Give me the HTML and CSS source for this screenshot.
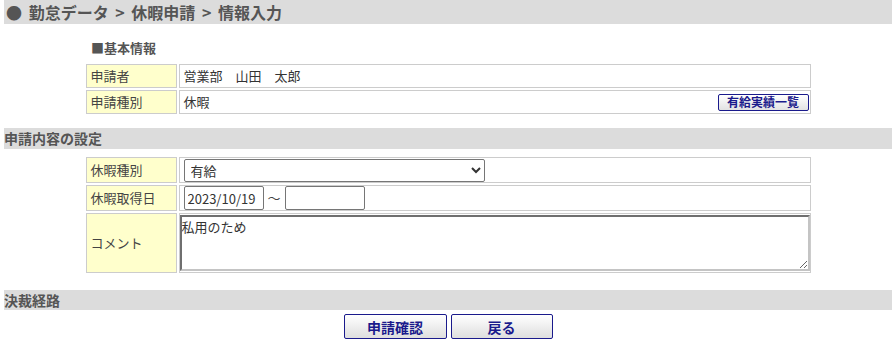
FILE: index.html
```html
<!DOCTYPE html>
<html lang="ja">
<head>
<meta charset="utf-8">
<title>情報入力</title>
<link rel="stylesheet" href="styles.css">
</head>
<body>
<div class="crumb">● 勤怠データ &gt; 休暇申請 &gt; 情報入力</div>

<div class="subhead">■基本情報</div>
<table class="form info">
  <tr>
    <th>申請者</th>
    <td>営業部　山田　太郎</td>
  </tr>
  <tr>
    <th>申請種別</th>
    <td><div class="field between"><span>休暇</span><button class="mini" type="button">有給実績一覧</button></div></td>
  </tr>
</table>

<div class="bar bar-settings">申請内容の設定</div>
<table class="form settings">
  <tr>
    <th>休暇種別</th>
    <td><div class="field"><select class="sel"><option>有給</option></select></div></td>
  </tr>
  <tr>
    <th>休暇取得日</th>
    <td><div class="field"><input class="date" type="text" value="2023/10/19"><span class="tilde">～</span><input class="date" type="text" value=""></div></td>
  </tr>
  <tr class="comment-row">
    <th>コメント</th>
    <td class="ta-cell"><textarea class="ta">私用のため</textarea></td>
  </tr>
</table>

<div class="bar bar-route">決裁経路</div>
<div class="actions">
  <button class="btn btn-confirm" type="button">申請確認</button>
  <button class="btn btn-back" type="button">戻る</button>
</div>
</body>
</html>
```

FILE: styles.css
```css
html, body {
  background: #ffffff;
}
body {
  margin: 0 4px;
  font-family: "Noto Sans CJK JP", "Noto Sans", sans-serif;
  color: #333333;
  font-size: 13px;
}
.crumb {
  background: #dcdcdc;
  height: 24px;
  line-height: 24px;
  padding-left: 2px;
  font-size: 16px;
  font-weight: bold;
  color: #555555;
  white-space: pre;
  word-spacing: 3px;
}
.subhead {
  margin: 14px 0 4px 87px;
  height: 20px;
  line-height: 20px;
  font-size: 13px;
  font-weight: bold;
  color: #555555;
}
.form {
  width: 729px;
  margin: 0 auto;
  border-collapse: separate;
  border-spacing: 2px;
}
.form th, .form td {
  border: 1px solid #cccccc;
  font-size: 13px;
  font-weight: normal;
  text-align: left;
  color: #333333;
  padding: 0 4px;
  height: 22px;
  line-height: 18px;
}
.form th {
  width: 81px;
  background: #ffffcc;
  color: #444444;
}
.field {
  display: flex;
  align-items: center;
}
.between {
  justify-content: space-between;
  height: 22px;
}
.mini {
  margin-right: -3px;
  height: 17px;
  width: 91px;
  padding: 0;
  font-family: inherit;
  font-size: 12px;
  line-height: 14px;
  font-weight: bold;
  color: #1a1a8c;
  background: linear-gradient(#ffffff, #e2e2e2);
  border: 1px solid #1a1a8c;
  border-radius: 2px;
}
.bar {
  background: #dcdcdc;
  font-size: 14px;
  font-weight: bold;
  color: #555555;
  white-space: nowrap;
}
.bar-settings {
  margin-top: 12px;
  height: 21px;
  line-height: 21px;
  margin-bottom: 6px;
}
.settings th, .settings td {
  height: 24px;
}
.settings .field {
  height: 24px;
}
.sel {
  display: block;
  width: 301px;
  height: 23px;
  font-family: inherit;
  font-size: 13px;
  color: #333333;
  border: 1px solid #767676;
  border-radius: 2px;
  background: #ffffff;
  padding: 0 2px;
}
.date {
  width: 80px;
  height: 24px;
  box-sizing: border-box;
  border: 1px solid #767676;
  border-radius: 2px;
  font-family: inherit;
  font-size: 13px;
  color: #333333;
  padding: 0 3px;
  margin: 0;
}
.tilde {
  display: inline-block;
  width: 21px;
  text-align: center;
  color: #444444;
}
.comment-row th, .comment-row td {
  height: 58px;
}
.ta-cell {
  padding: 0 !important;
}
.ta {
  display: block;
  width: 100%;
  height: 56px;
  box-sizing: border-box;
  margin: 1px 0;
  border: 2px solid;
  border-color: #6f6f6f #c4c4c4 #c4c4c4 #6f6f6f;
  font-family: inherit;
  font-size: 13px;
  color: #333333;
  padding: 0;
  resize: both;
}
.bar-route {
  margin-top: 15px;
  height: 20px;
  line-height: 20px;
}
.actions {
  display: flex;
  justify-content: center;
  gap: 4px;
  margin-top: 4px;
}
.btn {
  height: 25px;
  font-family: inherit;
  font-size: 14px;
  font-weight: bold;
  color: #1a1a8c;
  background: linear-gradient(#ffffff, #dedede);
  border: 1px solid #1a1a8c;
  border-radius: 2px;
  padding: 0;
}
.btn-confirm {
  width: 103px;
}
.btn-back {
  width: 102px;
}
```
